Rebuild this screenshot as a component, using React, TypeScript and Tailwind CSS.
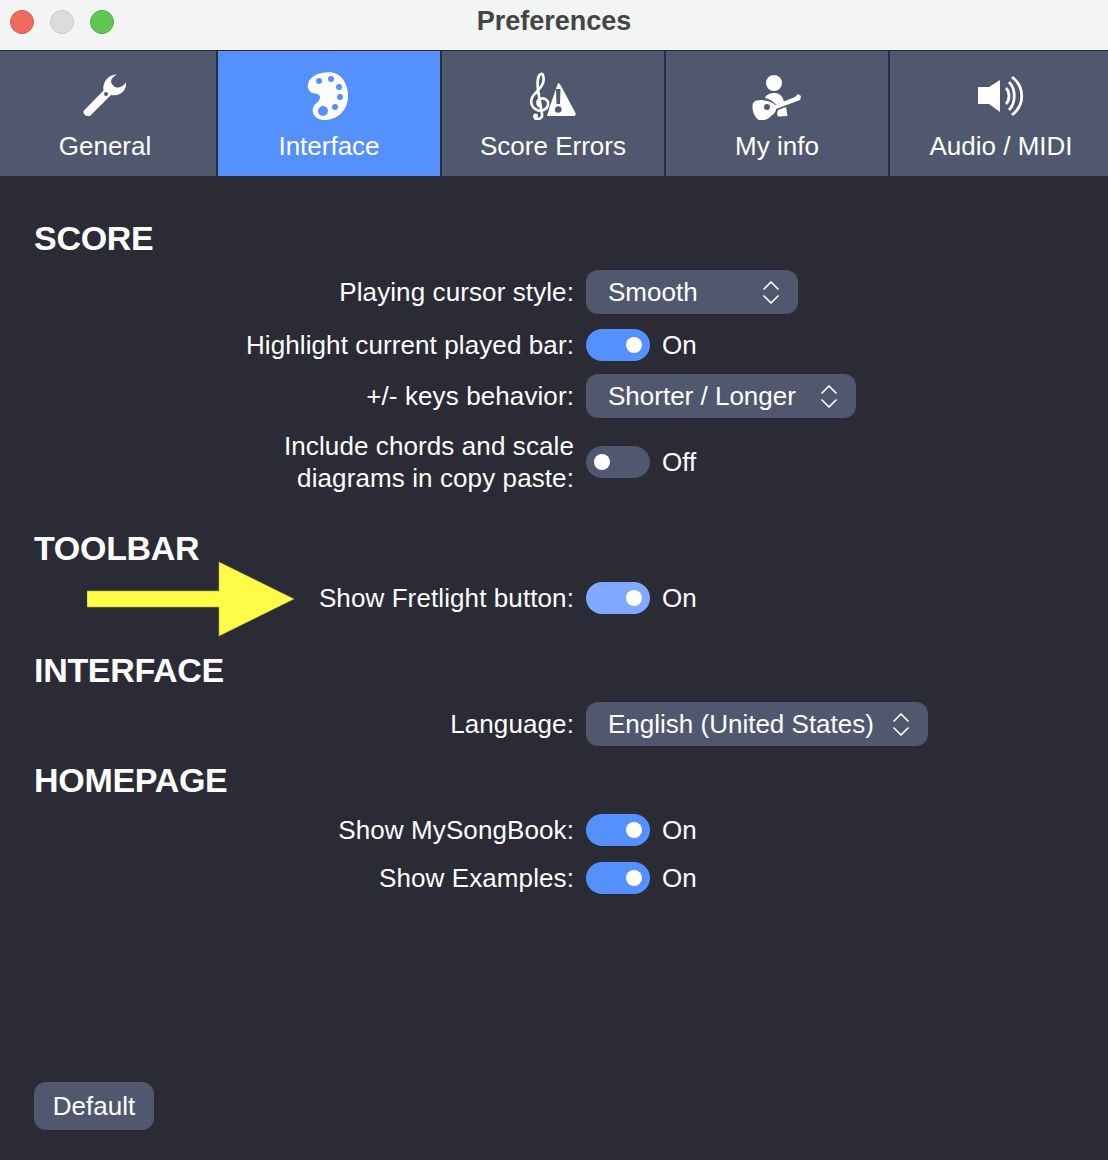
import type { ReactNode } from 'react';

function WrenchIcon() {
  return (
    <svg width="48" height="48" viewBox="81 72 48 48" fill="#fff">
      <path d="M84 110.500 L103.500 90.500 C102 83 108 74 117 74.500 C113.500 76.500 111 79 111 81.500 C111.500 85 115 88 118.500 87.500 C121 87.500 124 85 126 82.500 C127 90 120 97 111 95 L90.500 115.500 C87.500 118 81.500 113.500 84 110.500 Z" />
      <circle cx="106" cy="94" r="2" fill="#50586f" />
    </svg>
  );
}

function PaletteIcon() {
  return (
    <svg width="48" height="48" viewBox="305 72 48 48" fill="#fff">
      <path d="M308 84 C310 75 322 71.500 332 72.500 C342 74 348 84 348 96 C348 110 338 120 324 120 C316 120 311.500 114 313 108 C314 103 319 103 320 98 C320.500 94 316 93.500 312.500 93 C309 92 307 88 308 84 Z" />
      <g fill="#5590ff">
        <circle cx="319" cy="81" r="3" />
        <circle cx="331" cy="79" r="3" />
        <circle cx="339" cy="87" r="3" />
        <circle cx="340" cy="97" r="3" />
        <circle cx="335" cy="107" r="3" />
        <circle cx="323" cy="111" r="5" />
      </g>
    </svg>
  );
}

function ScoreErrorsIcon() {
  return (
    <svg width="50" height="48" viewBox="528 72 50 48">
      <path
        d="M541 107 C537 106 536 101 540 99 C545 97 549 101 548 105 C547 110 541 112 537 110 C532 108 530 103 532 98 C534 93 541 89 543 83 C544.500 78 543 73 541 74 C538 75 537 82 538 90 L542 114 C543 119 537 120 535 118"
        fill="none"
        stroke="#fff"
        strokeWidth="2.600"
        strokeLinecap="round"
      />
      <circle cx="535.500" cy="116" r="2.500" fill="#fff" />
      <path d="M558 83 C559 83 560 84 560.500 85 L575.500 113 C576 114.500 575.500 116 574 116 L547 116 L549 109 Z" fill="#fff" />
      <path d="M556 89 L560.500 89 L560 104 L556.500 104 Z" fill="#50586f" />
      <circle cx="558.300" cy="109.500" r="3.300" fill="#50586f" />
    </svg>
  );
}

function GuitarPlayerIcon() {
  return (
    <svg width="52" height="48" viewBox="751 72 52 48" fill="#fff">
      <circle cx="774" cy="83" r="8" />
      <path d="M765 98 C766 94.500 770 93 775 93 C780 93 783 97 784 102 L776 104.500 C773 101 769 99 765 98 Z" />
      <path d="M778 110 L786 107 L787.500 116 L779 116.500 C776.500 116.500 777 113 778 110 Z" />
      <path d="M753 103 C756 99 764 100 767 101 C771 102 774 103 775 105 L795 97 L798 94 L801 96 L800 100 L796 101.500 L776 109 C776 113 772 115 770 117 C767 120 762 121 759 120 C755 118 751 110 753 103 Z" />
      <circle cx="767" cy="107" r="3" fill="#50586f" />
    </svg>
  );
}

function SpeakerIcon() {
  return (
    <svg width="50" height="48" viewBox="976 72 50 48">
      <path d="M978 87 L989 87 L1000 80 L1000 112 L989 104 L978 104 Z" fill="#fff" />
      <g fill="none" stroke="#fff" strokeWidth="2.800" strokeLinecap="butt">
        <path d="M1006 88 C1010 92 1010 100 1006 104" />
        <path d="M1009 82 C1016 89 1016 103 1009 110" />
        <path d="M1012 77 C1025 87 1025 105 1012 115" />
      </g>
    </svg>
  );
}

function Chevrons() {
  return (
    <svg width="18" height="26" viewBox="0 0 18 26" fill="none" stroke="#fff" strokeWidth="1.700" strokeLinecap="round" strokeLinejoin="round">
      <path d="M2 10 L9 3 L16 10" />
      <path d="M2 17 L9 24 L16 17" />
    </svg>
  );
}

function Row({ label, children, className }: { label: ReactNode; children: ReactNode; className: string }) {
  return (
    <div className={`flex items-center gap-3 ${className}`}>
      <div className="w-[540px] shrink-0 text-right tracking-[0.1px]">{label}</div>
      {children}
    </div>
  );
}

function Toggle({ on = true, light = false }: { on?: boolean; light?: boolean }) {
  const bg = !on ? 'bg-[#50586f]' : light ? 'bg-[#80aaff]' : 'bg-[#5590ff]';
  return (
    <div className="flex items-center gap-3">
      <div className={`flex h-8 w-16 items-center rounded-full px-2 ${on ? 'justify-end' : 'justify-start'} ${bg}`}>
        <div className="h-4 w-4 rounded-full bg-white" />
      </div>
      <span>{on ? 'On' : 'Off'}</span>
    </div>
  );
}

function Select({ value, width }: { value: string; width: string }) {
  return (
    <div className={`flex h-11 items-center justify-between rounded-xl bg-[#50586f] pl-[22px] pr-[18px] ${width}`}>
      <span className="whitespace-nowrap">{value}</span>
      <Chevrons />
    </div>
  );
}

function Heading({ children, className }: { children: ReactNode; className: string }) {
  return <h2 className={`h-10 text-[34px] font-bold leading-10 tracking-[-0.3px] ${className}`}>{children}</h2>;
}

const tabs = [
  { label: 'General', icon: <WrenchIcon /> },
  { label: 'Interface', icon: <PaletteIcon />, active: true },
  { label: 'Score Errors', icon: <ScoreErrorsIcon /> },
  { label: 'My info', icon: <GuitarPlayerIcon /> },
  { label: 'Audio / MIDI', icon: <SpeakerIcon /> },
];

export default function App() {
  return (
    <div className="flex h-[1160px] w-[1108px] flex-col overflow-hidden bg-[#2a2b35] font-['Liberation_Sans',Arial,sans-serif] text-[26px] leading-8 text-white">
      <header className="relative flex h-[50px] shrink-0 items-center justify-center bg-[#f3f5f4] pb-2">
        <div className="absolute left-[10px] top-[10px] flex gap-4">
          <span className="h-6 w-6 rounded-full border border-[#dc5a50] bg-[#ef6b60]" />
          <span className="h-6 w-6 rounded-full border border-[#c8c8c6] bg-[#dcdddb]" />
          <span className="h-6 w-6 rounded-full border border-[#52ac48] bg-[#61c555]" />
        </div>
        <h1 className="text-[27px] font-bold text-[#444545]">Preferences</h1>
      </header>

      <nav className="-ml-[6px] flex h-[126px] shrink-0 gap-[2px] pt-px">
        {tabs.map((tab) => (
          <div
            key={tab.label}
            className={`flex w-[222px] shrink-0 flex-col items-center ${tab.active ? 'bg-[#5590ff]' : 'bg-[#50586f]'}`}
          >
            <div className="flex h-[69px] w-full items-end justify-center">{tab.icon}</div>
            <span className="mt-[10px]">{tab.label}</span>
          </div>
        ))}
      </nav>

      <main className="flex flex-1 flex-col pl-[34px]">
        <Heading className="mt-[42px]">SCORE</Heading>

        <Row label="Playing cursor style:" className="mt-3">
          <Select value="Smooth" width="w-[212px]" />
        </Row>
        <Row label="Highlight current played bar:" className="mt-[15px]">
          <Toggle />
        </Row>
        <Row label="+/- keys behavior:" className="mt-[13px]">
          <Select value="Shorter / Longer" width="w-[270px]" />
        </Row>
        <Row
          label={
            <>
              Include chords and scale
              <br />
              diagrams in copy paste:
            </>
          }
          className="mt-3"
        >
          <Toggle on={false} />
        </Row>

        <Heading className="mt-[34px]">TOOLBAR</Heading>
        <div className="relative">
          <Row label="Show Fretlight button:" className="mt-[14px]">
            <Toggle light />
          </Row>
          {/* annotation arrow drawn on top of the screenshot */}
          <svg className="absolute left-[53px] top-[-7px]" width="208" height="76" viewBox="0 0 208 76">
            <path d="M0 30 L132 30 L132 1 L207 38 L132 75 L132 46 L0 46 Z" fill="#fefc48" stroke="#b5b33c" strokeWidth="0.600" />
          </svg>
        </div>

        <Heading className="mt-9">INTERFACE</Heading>
        <Row label="Language:" className="mt-3">
          <Select value="English (United States)" width="w-[342px]" />
        </Row>

        <Heading className="mt-[14px]">HOMEPAGE</Heading>
        <Row label="Show MySongBook:" className="mt-[14px]">
          <Toggle />
        </Row>
        <Row label="Show Examples:" className="mt-4">
          <Toggle />
        </Row>

        <button className="mt-auto mb-[30px] h-12 w-[120px] rounded-xl bg-[#50586f] text-center">Default</button>
      </main>
    </div>
  );
}
